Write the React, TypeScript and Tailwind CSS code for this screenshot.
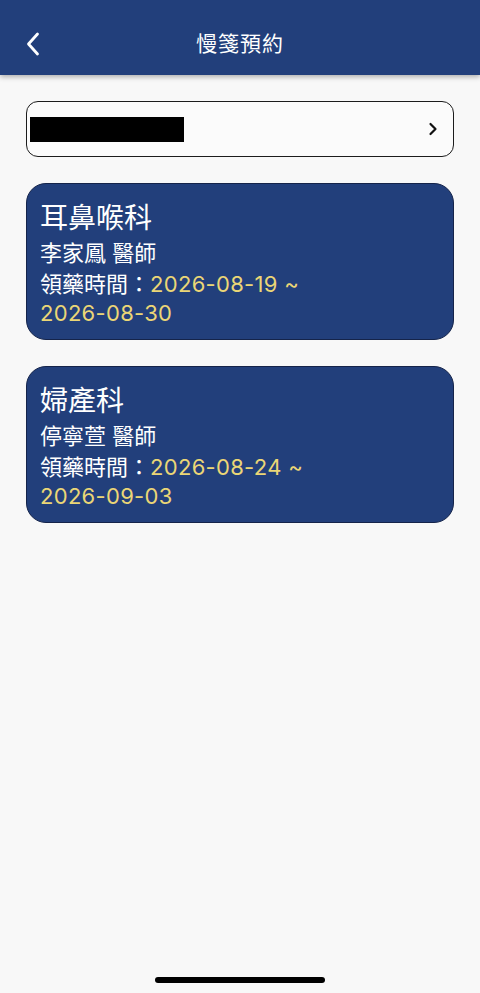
const FONT = "font-['Inter','Noto_Sans_CJK_TC',sans-serif]";

type Refill = { dept: string; doctor: string; from: string; to: string };

const refills: Refill[] = [
  { dept: "耳鼻喉科", doctor: "李家鳳 醫師", from: "2026-08-19", to: "2026-08-30" },
  { dept: "婦產科", doctor: "停寧萱 醫師", from: "2026-08-24", to: "2026-09-03" },
];

function Header() {
  return (
    <header className="relative z-10 h-[75px] bg-[#223f7b] shadow-[0_2px_5px_rgba(0,0,0,0.3)] flex items-center justify-center">
      <button className="absolute left-[22px] top-[28px] w-[22px] h-[32px] flex items-center justify-center">
        <svg width="14" height="24" viewBox="0 0 14 24" fill="none">
          <path d="M11.5 2 L2.5 12 L11.5 22" stroke="white" strokeWidth="2.8" strokeLinecap="round" strokeLinejoin="round" />
        </svg>
      </button>
      <h1 className="text-white text-[21px] font-normal tracking-[1px] mt-[13px]">慢箋預約</h1>
    </header>
  );
}

function PatientSelect() {
  return (
    <div className="h-[56px] rounded-[12px] border-[1.5px] border-[#1c1c1c] bg-[#fbfbfb] flex items-center pl-[3px] pr-[15px]">
      <div className="w-[154px] h-[25px] bg-black" />
      <div className="flex-1" />
      <svg width="10" height="14" viewBox="0 0 10 14" fill="none">
        <path d="M2.5 2 L7.5 7 L2.5 12" stroke="#111" strokeWidth="2.2" strokeLinecap="round" strokeLinejoin="round" />
      </svg>
    </div>
  );
}

function RefillCard({ item }: { item: Refill }) {
  return (
    <div className="h-[157px] rounded-[20px] bg-[#223f7b] border border-[#15244a] pt-[17px] px-[13px] text-white">
      <p className="text-[28px] leading-[34px]">{item.dept}</p>
      <p className="text-[22px] leading-[30px] mt-[3px]">{item.doctor}</p>
      <p className="text-[22px] leading-[29px] mt-[2px] pr-[10px]">
        領藥時間：
        <span className="text-[#ebd676] tracking-[0.3px]">
          <span className="whitespace-nowrap">{item.from} ~</span>{" "}
          <span className="whitespace-nowrap">{item.to}</span>
        </span>
      </p>
    </div>
  );
}

export default function App() {
  return (
    <div className={`${FONT} h-[993px] bg-[#f8f8f8] flex flex-col overflow-hidden`}>
      <Header />
      <main className="flex-1 px-[26px] pt-[26px] flex flex-col gap-[26px]">
        <PatientSelect />
        {refills.map((r) => (
          <RefillCard key={r.dept} item={r} />
        ))}
      </main>
      <div className="flex justify-center pb-[10px]">
        <div className="w-[170px] h-[6px] rounded-full bg-black" />
      </div>
    </div>
  );
}
